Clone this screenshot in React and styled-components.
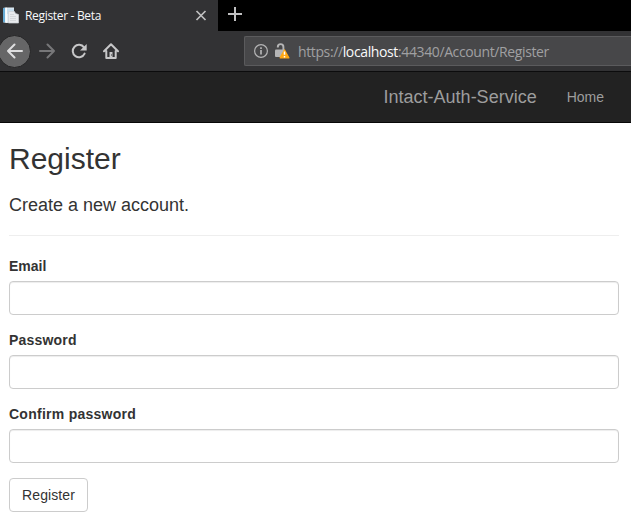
import React from "react";
import styled, { createGlobalStyle } from "styled-components";

const GlobalStyle = createGlobalStyle`
  * { box-sizing: border-box; }
  html, body { margin: 0; background: #fff; overflow: hidden; }
  body { font: 14px/20px "Liberation Sans", Arial, sans-serif; color: #333; }
`;

const TabStrip = styled.div`
  display: flex;
  height: 31px;
  background: #000;
`;

const Tab = styled.div`
  display: flex;
  align-items: center;
  width: 218px;
  padding: 0 11px 0 2px;
  background: #323234;
`;

const TabTitle = styled.span`
  flex: 1;
  margin-left: 6px;
  color: #f9f9fa;
  font: 12px/16px "Open Sans", sans-serif;
  letter-spacing: -0.32px;
  white-space: nowrap;
`;

const NewTab = styled.div`
  padding: 7px 0 0 10px;
  line-height: 0;
`;

const Toolbar = styled.div`
  display: flex;
  align-items: center;
  height: 41px;
  background: #323234;
  border-bottom: 1px solid #0c0c0d;
`;

const BackButton = styled.div`
  display: flex;
  align-items: center;
  justify-content: center;
  flex: none;
  width: 33px;
  height: 33px;
  margin-left: -2px;
  border: 1px solid #252526;
  border-radius: 50%;
  background: #666667;
`;

const ToolButton = styled.div`
  display: flex;
  align-items: center;
  justify-content: center;
  flex: none;
  width: 32px;
  height: 32px;
`;

const AddressBar = styled.div`
  display: flex;
  align-items: center;
  flex: 1;
  height: 30px;
  margin-left: 117px;
  padding-left: 9px;
  border: 1px solid #5b5b5d;
  border-right: 0;
  border-radius: 2px 0 0 2px;
  background: #474749;
`;

const Url = styled.span`
  margin-left: 8px;
  padding-top: 2px;
  color: #a0a0a2;
  font: 14px/20px "Open Sans", sans-serif;
  letter-spacing: -0.38px;
  white-space: nowrap;
`;

const Host = styled.span`
  color: #f9f9fa;
`;

const Navbar = styled.nav`
  display: flex;
  align-items: center;
  justify-content: flex-end;
  height: 51px;
  padding-right: 27px;
  background: #222;
  border-bottom: 1px solid #080808;
  color: #9d9d9d;
`;

const Brand = styled.span`
  margin-right: 30px;
  font-size: 18px;
`;

const Page = styled.main`
  padding: 19px 12px 0 9px;
`;

const Title = styled.h2`
  margin: 0 0 20px;
  font-size: 30px;
  font-weight: 400;
  line-height: 33px;
`;

const Subtitle = styled.h4`
  margin: 0;
  font-size: 18px;
  font-weight: 400;
  line-height: 20px;
`;

const Divider = styled.hr`
  margin: 20px 0;
  border: 0;
  border-top: 1px solid #eee;
`;

const Field = styled.div`
  margin-bottom: 15px;
`;

const Label = styled.label`
  display: block;
  margin-bottom: 5px;
  font-weight: 700;
  letter-spacing: ${(p) => p.$tracking};
`;

const Input = styled.input`
  display: block;
  width: 100%;
  height: 34px;
  padding: 6px 12px;
  border: 1px solid #ccc;
  border-radius: 4px;
  background: #fff;
  box-shadow: inset 0 1px 1px rgba(0, 0, 0, 0.075);
  font: inherit;
`;

const SubmitButton = styled.button`
  display: block;
  width: 79px;
  height: 34px;
  padding: 6px 12px;
  border: 1px solid #ccc;
  border-radius: 4px;
  background: #fff;
  color: #333;
  font: inherit;
  letter-spacing: 0.1px;
`;

const PagesIcon = () => (
  <svg width="17" height="17" viewBox="0 0 17 17">
    <path d="M1 1 4 .5h8V15l-7 1-4-.7z" fill="#e3edf4" />
    <path d="M1 1 3.2.7v14.8L1 15z" fill="#67acd6" />
    <path d="M3.2.7H5v15l-1.8-.2z" fill="#fafcfd" />
    <path d="M5 1.5h7V7H5z" fill="#c8dfee" />
    <path d="M6.5 4.5h6l1 2 3 1V16h-10z" fill="#e9ebee" stroke="#cbd0d6" strokeWidth=".7" />
    <path d="M8 7.5h4M8 9.5h6M8 11.5h6M8 13.5h6" stroke="#d5d8dc" />
  </svg>
);

const CloseIcon = () => (
  <svg width="12" height="12" viewBox="0 0 12 12" stroke="#c0c0c1" strokeWidth="1.7">
    <path d="m1.5 1 9 9m0-9-9 9" />
  </svg>
);

const PlusIcon = () => (
  <svg width="14" height="14" viewBox="0 0 14 14" stroke="#c0c0c1" strokeWidth="2">
    <path d="M7 0v14M0 7h14" />
  </svg>
);

const ArrowIcon = ({ color, flip }) => (
  <svg width="16" height="16" viewBox="0 0 16 16" fill="none" stroke={color} strokeWidth="2" strokeLinecap="round" strokeLinejoin="round">
    <path d={flip ? "M1 8h14M8.5 1.5 15 8l-6.5 6.5" : "M15 8H1M7.5 1.5 1 8l6.5 6.5"} />
  </svg>
);

const ReloadIcon = () => (
  <svg width="16" height="16" viewBox="0 0 16 16" fill="none">
    <path d="M13 4.4A6.2 6.2 0 1 0 13.6 10.6" stroke="#c7c7c8" strokeWidth="2" strokeLinecap="round" />
    <path d="M15.7 1v6.5H9z" fill="#c7c7c8" />
  </svg>
);

const HomeIcon = () => (
  <svg width="16" height="16" viewBox="0 0 16 16" fill="none" stroke="#c7c7c8" strokeWidth="2" strokeLinecap="round" strokeLinejoin="round">
    <path d="M1 8.3 8 1.3l7 7M3.3 8v7h9.4V8" />
    <path d="M8 14.5V9" strokeWidth="3" strokeLinecap="butt" />
    <path d="M8.5 11.5v1" stroke="#323234" strokeWidth="1" strokeLinecap="butt" />
  </svg>
);

const InfoIcon = () => (
  <svg width="14" height="14" viewBox="0 0 14 14" fill="none" stroke="#b5b5b6">
    <circle cx="7" cy="7" r="6.4" strokeWidth="1.2" />
    <path d="M7 6v4.5M7 3.2v1.7" strokeWidth="1.7" />
  </svg>
);

const LockWarningIcon = styled(({ className }) => (
  <svg className={className} width="16" height="16" viewBox="0 0 16 16">
    <path d="M3.8 4.6V3.9a2.8 2.8 0 0 1 5.6 0V8" fill="none" stroke="#b5b5b6" strokeWidth="1.9" />
    <rect x="1" y="6.5" width="9.5" height="7.5" rx="1" fill="#b5b5b6" />
    <path d="m10.5 7 4.3 7.8H6.2z" fill="#ffa814" stroke="#ffa814" strokeLinejoin="round" strokeWidth="1.4" />
    <path d="M10.5 8.5v3.3M10.5 13v1.4" stroke="#fff" strokeWidth="1.5" />
  </svg>
))`
  margin-left: 6px;
`;

const fields = [
  { id: "email", label: "Email", type: "email", tracking: "0" },
  { id: "password", label: "Password", type: "password", tracking: "0.2px" },
  { id: "confirm", label: "Confirm password", type: "password", tracking: "0.26px" },
];

export default function App() {
  return (
    <>
      <GlobalStyle />
      <TabStrip>
        <Tab>
          <PagesIcon />
          <TabTitle>Register - Beta</TabTitle>
          <CloseIcon />
        </Tab>
        <NewTab><PlusIcon /></NewTab>
      </TabStrip>
      <Toolbar>
        <BackButton><ArrowIcon color="#dededf" /></BackButton>
        <ToolButton><ArrowIcon color="#777779" flip /></ToolButton>
        <ToolButton><ReloadIcon /></ToolButton>
        <ToolButton><HomeIcon /></ToolButton>
        <AddressBar>
          <InfoIcon />
          <LockWarningIcon />
          <Url>https://<Host>localhost</Host>:44340/Account/Register</Url>
        </AddressBar>
      </Toolbar>
      <Navbar>
        <Brand>Intact-Auth-Service</Brand>
        <span>Home</span>
      </Navbar>
      <Page>
        <Title>Register</Title>
        <Subtitle>Create a new account.</Subtitle>
        <Divider />
        {fields.map((field) => (
          <Field key={field.id}>
            <Label htmlFor={field.id} $tracking={field.tracking}>{field.label}</Label>
            <Input id={field.id} type={field.type} />
          </Field>
        ))}
        <SubmitButton type="button">Register</SubmitButton>
      </Page>
    </>
  );
}
